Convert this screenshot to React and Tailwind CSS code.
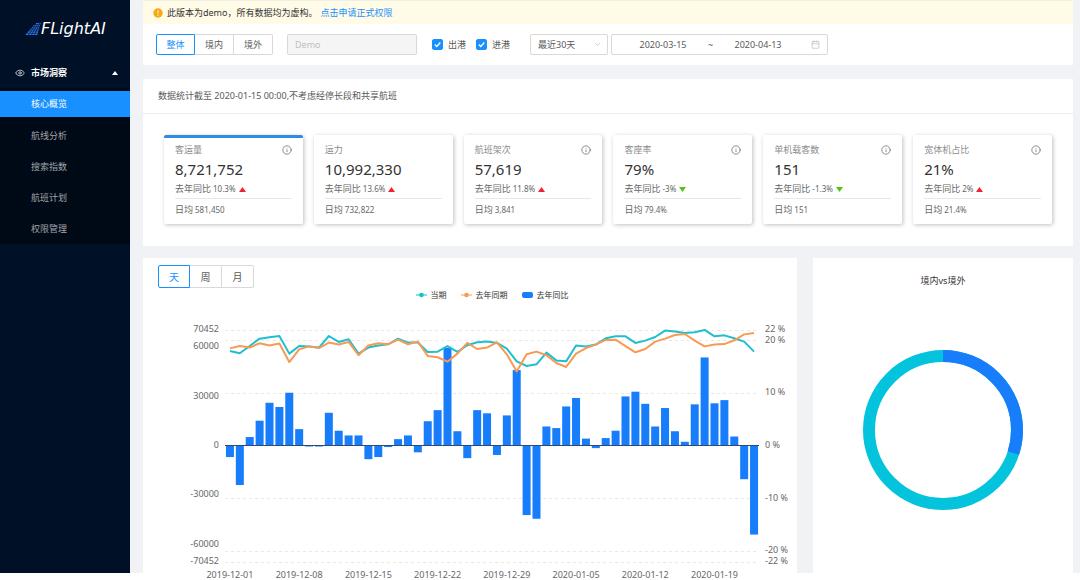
import React from 'react';
import { Calendar, ChevronDown, Eye, Info } from 'lucide-react';

const menuItems = ['核心概览', '航线分析', '搜索指数', '航班计划', '权限管理'];

const metrics = [
  { title: '客运量', value: '8,721,752', yoy: '10.3%', up: true, daily: '581,450', info: true, active: true },
  { title: '运力', value: '10,992,330', yoy: '13.6%', up: true, daily: '732,822' },
  { title: '航班架次', value: '57,619', yoy: '11.8%', up: true, daily: '3,841', info: true },
  { title: '客座率', value: '79%', yoy: '-3%', up: false, daily: '79.4%', info: true },
  { title: '单机载客数', value: '151', yoy: '-1.3%', up: false, daily: '151', info: true },
  { title: '宽体机占比', value: '21%', yoy: '2%', up: true, daily: '21.4%', info: true },
];

// year-on-year change per day, in percent
const yoy = [
  -2.1, -7.4, 1.7, 4.8, 8.2, 7.4, 10.1, 3.2, -0.1, -0.1, 6.3, 2.9, 2.0, 2.0, -2.5, -2.1, -0.2, 1.3,
  2.0, -1.2, 4.7, 6.8, 18.6, 2.8, -2.3, 6.8, 6.2, -1.7, 5.8, 14.4, -13.1, -13.8, 3.7, 3.4, 7.5, 9.1,
  1.4, -0.4, 1.5, 2.9, 9.4, 10.3, 8.0, 3.7, 7.2, 2.8, 0.8, 7.9, 16.8, 8.1, 8.7, 1.8, -6.3, -16.8,
];

// daily passengers, in thousands
const current = [
  57.7, 56.3, 60.7, 65.2, 66.0, 66.8, 56.1, 60.7, 60.5, 59.8, 66.8, 63.2, 64.8, 56.1, 59.8, 61.0,
  61.8, 65.2, 62.8, 62.8, 57.1, 57.3, 60.7, 57.2, 61.2, 63.0, 63.4, 62.6, 59.1, 51.4, 48.6, 49.6,
  56.7, 52.0, 51.4, 61.0, 60.5, 61.6, 65.4, 66.6, 66.6, 62.6, 64.0, 66.2, 70.1, 69.5, 68.6, 69.1,
  70.5, 66.6, 67.2, 65.4, 63.4, 57.3,
];

const lastYear = [
  59.3, 60.7, 59.8, 62.4, 61.0, 62.2, 51.0, 58.7, 60.5, 59.5, 62.8, 61.6, 63.2, 55.1, 61.0, 62.4,
  61.8, 64.6, 61.8, 63.4, 54.7, 53.9, 51.2, 56.1, 62.6, 58.9, 59.8, 63.0, 55.7, 45.3, 55.7, 57.3,
  55.1, 50.4, 48.0, 56.1, 59.5, 61.6, 64.4, 64.6, 60.7, 56.9, 58.9, 63.4, 65.2, 67.4, 68.0, 64.0,
  60.5, 61.6, 61.9, 64.2, 67.8, 68.6,
];

const dates = [
  '2019-12-01', '2019-12-08', '2019-12-15', '2019-12-22',
  '2019-12-29', '2020-01-05', '2020-01-12', '2020-01-19',
];

const leftTicks = [70452, 60000, 30000, 0, -30000, -60000, -70452];
const rightTicks = [22, 20, 10, 0, -10, -20, -22];

const PLOT_LEFT = 82;
const PLOT_RIGHT = 616;
const BASE = 145;
const HALF = 116;
const STEP = (PLOT_RIGHT - PLOT_LEFT) / yoy.length;

const xAt = (i) => PLOT_LEFT + STEP * (i + 0.5);
const yPercent = (v) => BASE - (v / 22) * HALF;
const yCount = (v) => BASE - (v / 70452) * HALF;
const toPoints = (series) => series.map((v, i) => `${xAt(i)},${yCount(v * 1000)}`).join(' ');

function Logo() {
  return (
    <a href="/" className="flex h-[57px] items-center pl-[25px] text-white">
      <svg viewBox="0 0 16 13" className="h-[13px] w-4" aria-hidden="true">
        <path d="M0 13 9 3 16 0 12 13Z" fill="#12397f" />
        <path
          d="M1 12.4h11.5M3 10.2h10M5 8h8.600M7 5.800h7.200M8.500 3.600h6.200M11 1.600h4.500"
          stroke="#2f7bea"
          strokeWidth="1.200"
        />
        <path d="M3.500 13 11 2M6.500 13 13 1.500M9.500 13 15 .5" stroke="#001127" strokeWidth=".7" />
      </svg>
      <span className="font-['DejaVu_Sans',sans-serif] text-[16px] italic leading-5">FLightAI</span>
    </a>
  );
}

function Sidebar() {
  return (
    <aside className="w-[130px] shrink-0 bg-[#001127]">
      <Logo />
      <nav>
        <button type="button" className="flex h-[31px] w-full items-center pl-[15px] pr-3 font-bold text-white">
          <Eye size={10} strokeWidth={2} className="text-gray-300" />
          <span className="ml-[6px]">市场洞察</span>
          <svg viewBox="0 0 6 4" className="ml-auto h-1 w-[6px]" aria-hidden="true">
            <path d="M0 4 3 0 6 4Z" fill="#fff" />
          </svg>
        </button>
        <ul className="flex flex-col gap-[5px] bg-[#000916] py-[3px]">
          {menuItems.map((item, i) => (
            <li key={item}>
              <a
                href="#"
                className={
                  i === 0
                    ? 'flex h-[26px] items-center bg-[#1890ff] pl-[31px] text-white'
                    : 'flex h-[26px] items-center pl-[31px] pt-px text-[#a0a5ab]'
                }
              >
                {item}
              </a>
            </li>
          ))}
        </ul>
      </nav>
    </aside>
  );
}

function Notice() {
  return (
    <div className="flex h-6 items-center border-t border-[#f0efe4] bg-[#fffbe6] pl-[10px] text-[#333]">
      <svg viewBox="0 0 10 10" className="mr-1 h-[10px] w-[10px]" aria-hidden="true">
        <circle cx="5" cy="5" r="4.700" fill="#f5a914" />
        <path d="M5 2.300v3.200M5 6.700v1" stroke="#fff" strokeWidth="1" />
      </svg>
      <span>此版本为demo，所有数据均为虚构。</span>
      <a href="#" className="ml-[3px] text-[#1890ff]">点击申请正式权限</a>
    </div>
  );
}

function Segmented({ options, large }) {
  return (
    <div className={large ? 'flex text-[10px]' : 'flex'}>
      {options.map((option, i) => (
        <button
          key={option}
          type="button"
          className={[
            large ? 'h-[23px] w-8' : 'h-[21px] w-[39px]',
            i === 0
              ? 'rounded-l-xs border border-[#1890ff] text-[#1890ff]'
              : 'border-y border-r border-[#d9d9d9] text-[#595959]',
            i === options.length - 1 ? 'rounded-r-xs' : '',
          ].join(' ')}
        >
          {option}
        </button>
      ))}
    </div>
  );
}

function Checkbox({ id, label }) {
  return (
    <label htmlFor={id} className="flex items-center gap-[5px]">
      <span className="relative h-[11px] w-[11px]">
        <input
          id={id}
          type="checkbox"
          defaultChecked
          className="peer block h-[11px] w-[11px] appearance-none rounded-xs border border-[#d9d9d9] checked:border-[#1890ff] checked:bg-[#1890ff]"
        />
        <svg
          viewBox="0 0 11 11"
          className="pointer-events-none absolute inset-0 hidden h-[11px] w-[11px] peer-checked:block"
          aria-hidden="true"
        >
          <path d="M2.800 5.500 4.800 7.500 8.300 3.500" fill="none" stroke="#fff" strokeWidth="1.300" />
        </svg>
      </span>
      {label}
    </label>
  );
}

function Toolbar() {
  return (
    <div className="flex h-[41px] items-center bg-white pl-[13px] text-[#595959]">
      <Segmented options={['整体', '境内', '境外']} />
      <input
        type="text"
        disabled
        placeholder="Demo"
        aria-label="公司"
        className="ml-[14px] h-[21px] w-[130px] rounded-xs border border-[#d9d9d9] bg-[#f5f5f5] px-[7px] placeholder:text-[#bfbfbf]"
      />
      <div className="ml-[15px] flex gap-[10px]">
        <Checkbox id="departure" label="出港" />
        <Checkbox id="arrival" label="进港" />
      </div>
      <div className="relative ml-5">
        <select
          aria-label="时间范围"
          className="block h-[21px] w-[78px] appearance-none rounded-xs border border-[#d9d9d9] bg-white pl-[7px]"
        >
          <option>最近30天</option>
          <option>最近7天</option>
        </select>
        <ChevronDown size={9} strokeWidth={2} className="pointer-events-none absolute right-[6px] top-[6px] text-[#bfbfbf]" />
      </div>
      <div className="ml-[3px] flex h-[21px] w-[217px] items-center rounded-xs border border-[#d9d9d9] pr-[7px]">
        <input type="text" defaultValue="2020-03-15" aria-label="开始日期" className="ml-[11px] w-20 text-center" />
        <span className="w-[15px] text-center">~</span>
        <input type="text" defaultValue="2020-04-13" aria-label="结束日期" className="w-20 text-center" />
        <Calendar size={9} strokeWidth={2} className="ml-auto text-[#bfbfbf]" />
      </div>
    </div>
  );
}

function MetricCard({ title, value, yoy: change, up, daily, info, active }) {
  return (
    <div
      className={[
        'rounded-xs border-t-[3px] bg-white px-[11px] pb-2 pt-[5px] shadow-[1px_1px_4px_rgba(0,0,0,0.25)]',
        active ? 'border-[#2f8ae6]' : 'border-white',
      ].join(' ')}
    >
      <div className="flex h-[14px] items-center justify-between text-[#8c8c8c]">
        {title}
        {info && <Info size={10} strokeWidth={2} className="text-[#777]" />}
      </div>
      <div className="mt-[2px] text-[15px] leading-5 text-[#333]">{value}</div>
      <div className="mt-1 flex h-3 items-center text-[#666]">
        去年同比
        <span className="ml-[2px] text-[8px]">{change}</span>
        <svg viewBox="0 0 7 5" className="ml-[3px] h-[5px] w-[7px]" aria-hidden="true">
          {up ? <path d="M0 5 3.500 0 7 5Z" fill="#f5222d" /> : <path d="M0 0h7L3.500 5Z" fill="#52c41a" />}
        </svg>
      </div>
      <div className="mt-[3px] flex h-[18px] items-center border-t border-[#e8e8e8] pt-[5px] text-[#666]">
        日均
        <span className="ml-[2px] text-[8px]">{daily}</span>
      </div>
    </div>
  );
}

function Overview() {
  return (
    <section className="mt-[14px] bg-white">
      <h2 className="flex h-[35px] items-center border-b border-[#ececec] pl-[15px] text-[#595959]">
        数据统计截至 2020-01-15 00:00,不考虑经停长段和共享航班
      </h2>
      <div className="grid grid-cols-6 gap-[11px] px-[21px] pb-[22px] pt-[21px]">
        {metrics.map((metric) => (
          <MetricCard key={metric.title} {...metric} />
        ))}
      </div>
    </section>
  );
}

function LineMark({ color }) {
  return (
    <svg viewBox="0 0 11 6" className="h-[6px] w-[11px]" aria-hidden="true">
      <path d="M0 3h11" stroke={color} strokeWidth="1" />
      <circle cx="5.500" cy="3" r="2.300" fill={color} />
    </svg>
  );
}

function Legend() {
  return (
    <div className="flex h-[13px] items-center justify-center gap-[14px] pl-11 text-[8px] text-[#333]">
      <span className="flex items-center gap-1"><LineMark color="#0fc2c8" />当期</span>
      <span className="flex items-center gap-1"><LineMark color="#f79a55" />去年同期</span>
      <span className="flex items-center gap-1">
        <i className="h-[6px] w-[11px] rounded-xs bg-[#187dfb]" />
        去年同比
      </span>
    </div>
  );
}

function TrendChart() {
  return (
    <svg viewBox="0 0 654 284" className="block w-full text-[9px]" role="img" aria-label="客运量趋势">
      <g stroke="#e8e8e8" strokeDasharray="3 3">
        {rightTicks.filter((t) => t !== 0).map((t) => (
          <line key={t} x1={PLOT_LEFT} x2={PLOT_RIGHT} y1={Math.floor(yPercent(t)) + 0.5} y2={Math.floor(yPercent(t)) + 0.5} />
        ))}
      </g>
      <g fill="#187dfb">
        {yoy.map((v, i) => (
          <rect
            key={i}
            x={xAt(i) - 4}
            y={Math.min(BASE, yPercent(v))}
            width="8"
            height={Math.abs(yPercent(v) - BASE)}
          />
        ))}
      </g>
      <line x1={PLOT_LEFT} x2={PLOT_RIGHT} y1={BASE - 0.5} y2={BASE - 0.5} stroke="#2c4a73" />
      <g fill="none" strokeWidth="2" strokeLinejoin="round">
        <polyline points={toPoints(current)} stroke="#1fc0cd" />
        <polyline points={toPoints(lastYear)} stroke="#f79a55" />
      </g>
      <g fill="#666" textAnchor="end">
        {leftTicks.map((t) => (
          <text key={t} x="76" y={yCount(t) + 2}>{t}</text>
        ))}
      </g>
      <g fill="#666">
        {rightTicks.map((t) => (
          <text key={t} x="622" y={yPercent(t) + 2}>{t} %</text>
        ))}
      </g>
      <g fill="#666" textAnchor="middle">
        {dates.map((date, i) => (
          <text key={date} x={xAt(i * 7)} y="277">{date}</text>
        ))}
      </g>
    </svg>
  );
}

function Donut({ share }) {
  const length = 2 * Math.PI * 74;
  return (
    <svg viewBox="0 0 160 160" className="mx-auto mt-[63px] block w-40" role="img" aria-label="境内vs境外">
      <g fill="none" strokeWidth="12" transform="rotate(-90 80 80)">
        <circle cx="80" cy="80" r="74" stroke="#03c4dc" />
        <circle cx="80" cy="80" r="74" stroke="#187dfb" strokeDasharray={`${length * share} ${length}`} />
      </g>
    </svg>
  );
}

export default function App() {
  return (
    <div className="flex h-screen overflow-hidden bg-white pb-[7px] font-['Noto_Sans','Noto_Sans_CJK_SC',sans-serif] text-[9px] leading-3">
      <Sidebar />
      <main className="min-w-0 flex-1 bg-[#f0f2f5] pl-[13px] pr-[7px]">
        <Notice />
        <Toolbar />
        <Overview />
        <div className="mt-3 flex gap-4">
          <section className="min-w-0 flex-1 bg-white pt-[7px]">
            <div className="pl-[15px]">
              <Segmented options={['天', '周', '月']} large />
            </div>
            <Legend />
            <TrendChart />
          </section>
          <section className="w-[260px] bg-white pt-[17px]">
            <h3 className="text-center text-[#333]">境内vs境外</h3>
            <Donut share={0.3} />
          </section>
        </div>
      </main>
    </div>
  );
}
